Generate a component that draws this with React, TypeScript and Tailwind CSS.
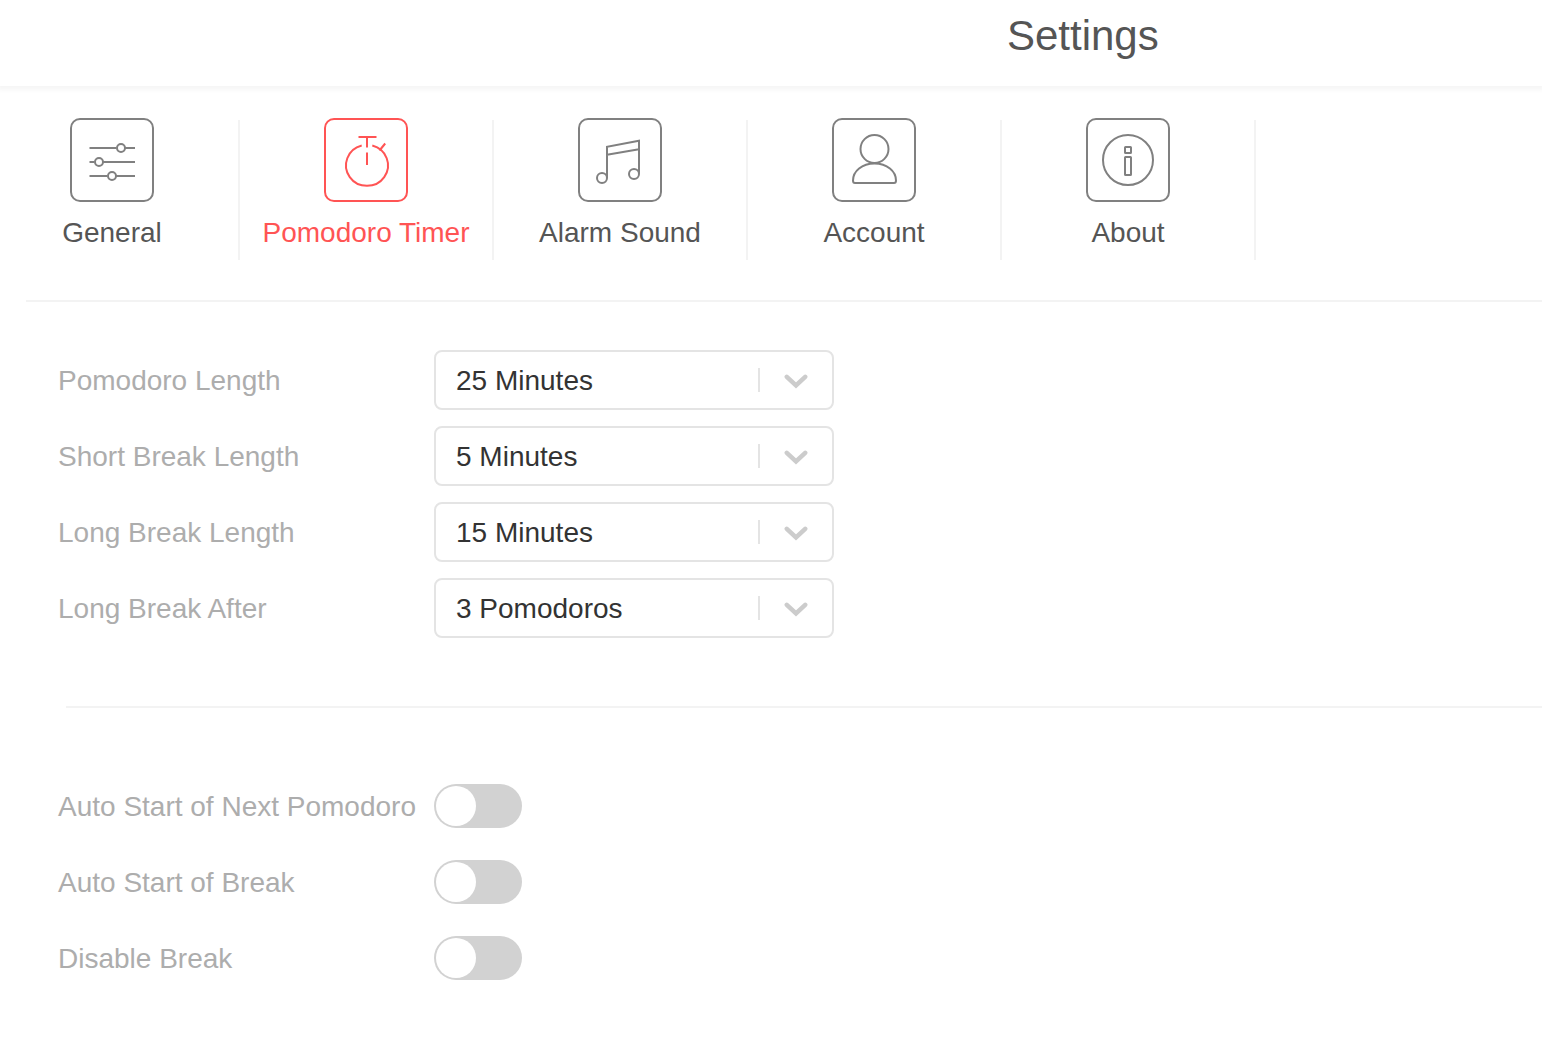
import { useState } from 'react';
import type { ReactNode } from 'react';

type Tab = {
  id: string;
  label: string;
  icon: ReactNode;
};

const tabs: Tab[] = [
  {
    id: 'general',
    label: 'General',
    icon: (
      <>
        <path d="M19.5 30h27M55 30h10M19.5 44h5M33 44h32M19.5 58h18M46 58h19" />
        <circle cx="51" cy="30" r="4" />
        <circle cx="29" cy="44" r="4" />
        <circle cx="42" cy="58" r="4" />
      </>
    ),
  },
  {
    id: 'timer',
    label: 'Pomodoro Timer',
    icon: (
      <>
        <path d="M34.5 19h18M43 19v10.5M43 34.5v12.5M55.5 32.5l5.7-7" />
        <path d="M37.7 27.5A21 20.5 0 1 0 48.3 27.5" />
      </>
    ),
  },
  {
    id: 'sound',
    label: 'Alarm Sound',
    icon: (
      <>
        <path d="M29 60V28.8l32-6V56M29 36.8l32-5.6" />
        <circle cx="24" cy="60" r="5" />
        <circle cx="56" cy="56" r="5" />
      </>
    ),
  },
  {
    id: 'account',
    label: 'Account',
    icon: (
      <>
        <circle cx="42.5" cy="31" r="14" />
        <path d="M23 65Q21 65 21 62.5C21 53 30 45.5 42.5 45.5S64 53 64 62.5Q64 65 62 65Z" />
      </>
    ),
  },
  {
    id: 'about',
    label: 'About',
    icon: (
      <>
        <circle cx="42" cy="42" r="25" />
        <rect x="39" y="29" width="6" height="6" rx="0.5" />
        <rect x="39" y="39" width="6" height="18" rx="0.5" />
      </>
    ),
  },
];

const lengths = [
  { id: 'pomodoro-length', label: 'Pomodoro Length', value: '25 Minutes' },
  { id: 'short-break-length', label: 'Short Break Length', value: '5 Minutes' },
  { id: 'long-break-length', label: 'Long Break Length', value: '15 Minutes' },
  { id: 'long-break-after', label: 'Long Break After', value: '3 Pomodoros' },
];

const switches = [
  { id: 'auto-next', label: 'Auto Start of Next Pomodoro' },
  { id: 'auto-break', label: 'Auto Start of Break' },
  { id: 'disable-break', label: 'Disable Break' },
];

function TabButton({ tab, active, onSelect }: { tab: Tab; active: boolean; onSelect: () => void }) {
  return (
    <button
      type="button"
      aria-current={active ? 'page' : undefined}
      onClick={onSelect}
      className={`flex w-[252px] cursor-pointer flex-col items-center gap-3 ${active ? 'text-[#ff5454]' : 'text-[#555555]'}`}
    >
      <svg
        viewBox="0 0 84 84"
        className={`size-[84px] fill-none stroke-2 ${active ? 'stroke-[#ff5454]' : 'stroke-[#808080]'}`}
        aria-hidden="true"
      >
        <rect x="1" y="1" width="82" height="82" rx="9" />
        {tab.icon}
      </svg>
      <span className="whitespace-nowrap leading-[38px]">{tab.label}</span>
    </button>
  );
}

function SelectField({ id, label, value }: { id: string; label: string; value: string }) {
  return (
    <div className="flex items-center">
      <label htmlFor={id} className="w-[376px] shrink-0 pt-0.5 text-[#adadad]">
        {label}
      </label>
      <div className="relative w-[400px]">
        <select
          id={id}
          defaultValue={value}
          className="h-[60px] w-full appearance-none rounded-lg border-2 border-[#e4e4e4] bg-white pl-5 pt-0.5 text-[#333333] outline-none"
        >
          <option>{value}</option>
        </select>
        <div className="pointer-events-none absolute inset-y-0 right-[26px] flex items-center gap-6">
          <span className="h-6 w-0.5 bg-[#e4e4e4]" />
          <svg viewBox="0 0 24 24" className="size-6 fill-none stroke-[#cccccc]" aria-hidden="true">
            <path d="M2.8 8.8 12 17.4l9.2-8.6" strokeWidth="4.5" strokeLinecap="round" />
          </svg>
        </div>
      </div>
    </div>
  );
}

function SwitchField({ id, label }: { id: string; label: string }) {
  return (
    <div className="flex items-center">
      <label htmlFor={id} className="w-[376px] shrink-0 whitespace-nowrap pt-0.5 text-[#adadad]">
        {label}
      </label>
      <input
        id={id}
        type="checkbox"
        role="switch"
        className="flex h-11 w-[88px] cursor-pointer appearance-none rounded-full bg-[#d2d2d2] p-0.5 before:size-10 before:rounded-full before:bg-white before:transition checked:bg-[#ff5454] checked:before:translate-x-11"
      />
    </div>
  );
}

export default function App() {
  const [activeTab, setActiveTab] = useState('timer');

  return (
    <div className="min-h-screen overflow-x-hidden bg-white font-['Liberation_Sans',Arial,sans-serif] text-[28px] leading-8">
      <header className="h-[86px] pl-[65.3%] pt-3 shadow-[0_2px_4px_2px_rgba(0,0,0,0.04)]">
        <h1 className="text-[42px] leading-[48px] text-[#555555]">Settings</h1>
      </header>

      <nav className="-ml-3.5 flex pt-8" aria-label="Settings sections">
        {tabs.map((tab) => (
          <div key={tab.id} className="flex shrink-0">
            <TabButton tab={tab} active={tab.id === activeTab} onSelect={() => setActiveTab(tab.id)} />
            <span className="mt-0.5 h-[140px] w-0.5 bg-[#f3f3f3]" />
          </div>
        ))}
      </nav>

      <hr className="ml-[26px] mt-10 border-t-2 border-[#f3f3f3]" />

      <main>
        <section className="flex flex-col gap-4 pl-[58px] pt-12">
          {lengths.map((field) => (
            <SelectField key={field.id} {...field} />
          ))}
        </section>

        <hr className="ml-[66px] mt-[68px] border-t-2 border-[#f3f3f3]" />

        <section className="flex flex-col gap-8 pb-[74px] pl-[58px] pt-[76px]">
          {switches.map((field) => (
            <SwitchField key={field.id} {...field} />
          ))}
        </section>
      </main>
    </div>
  );
}
